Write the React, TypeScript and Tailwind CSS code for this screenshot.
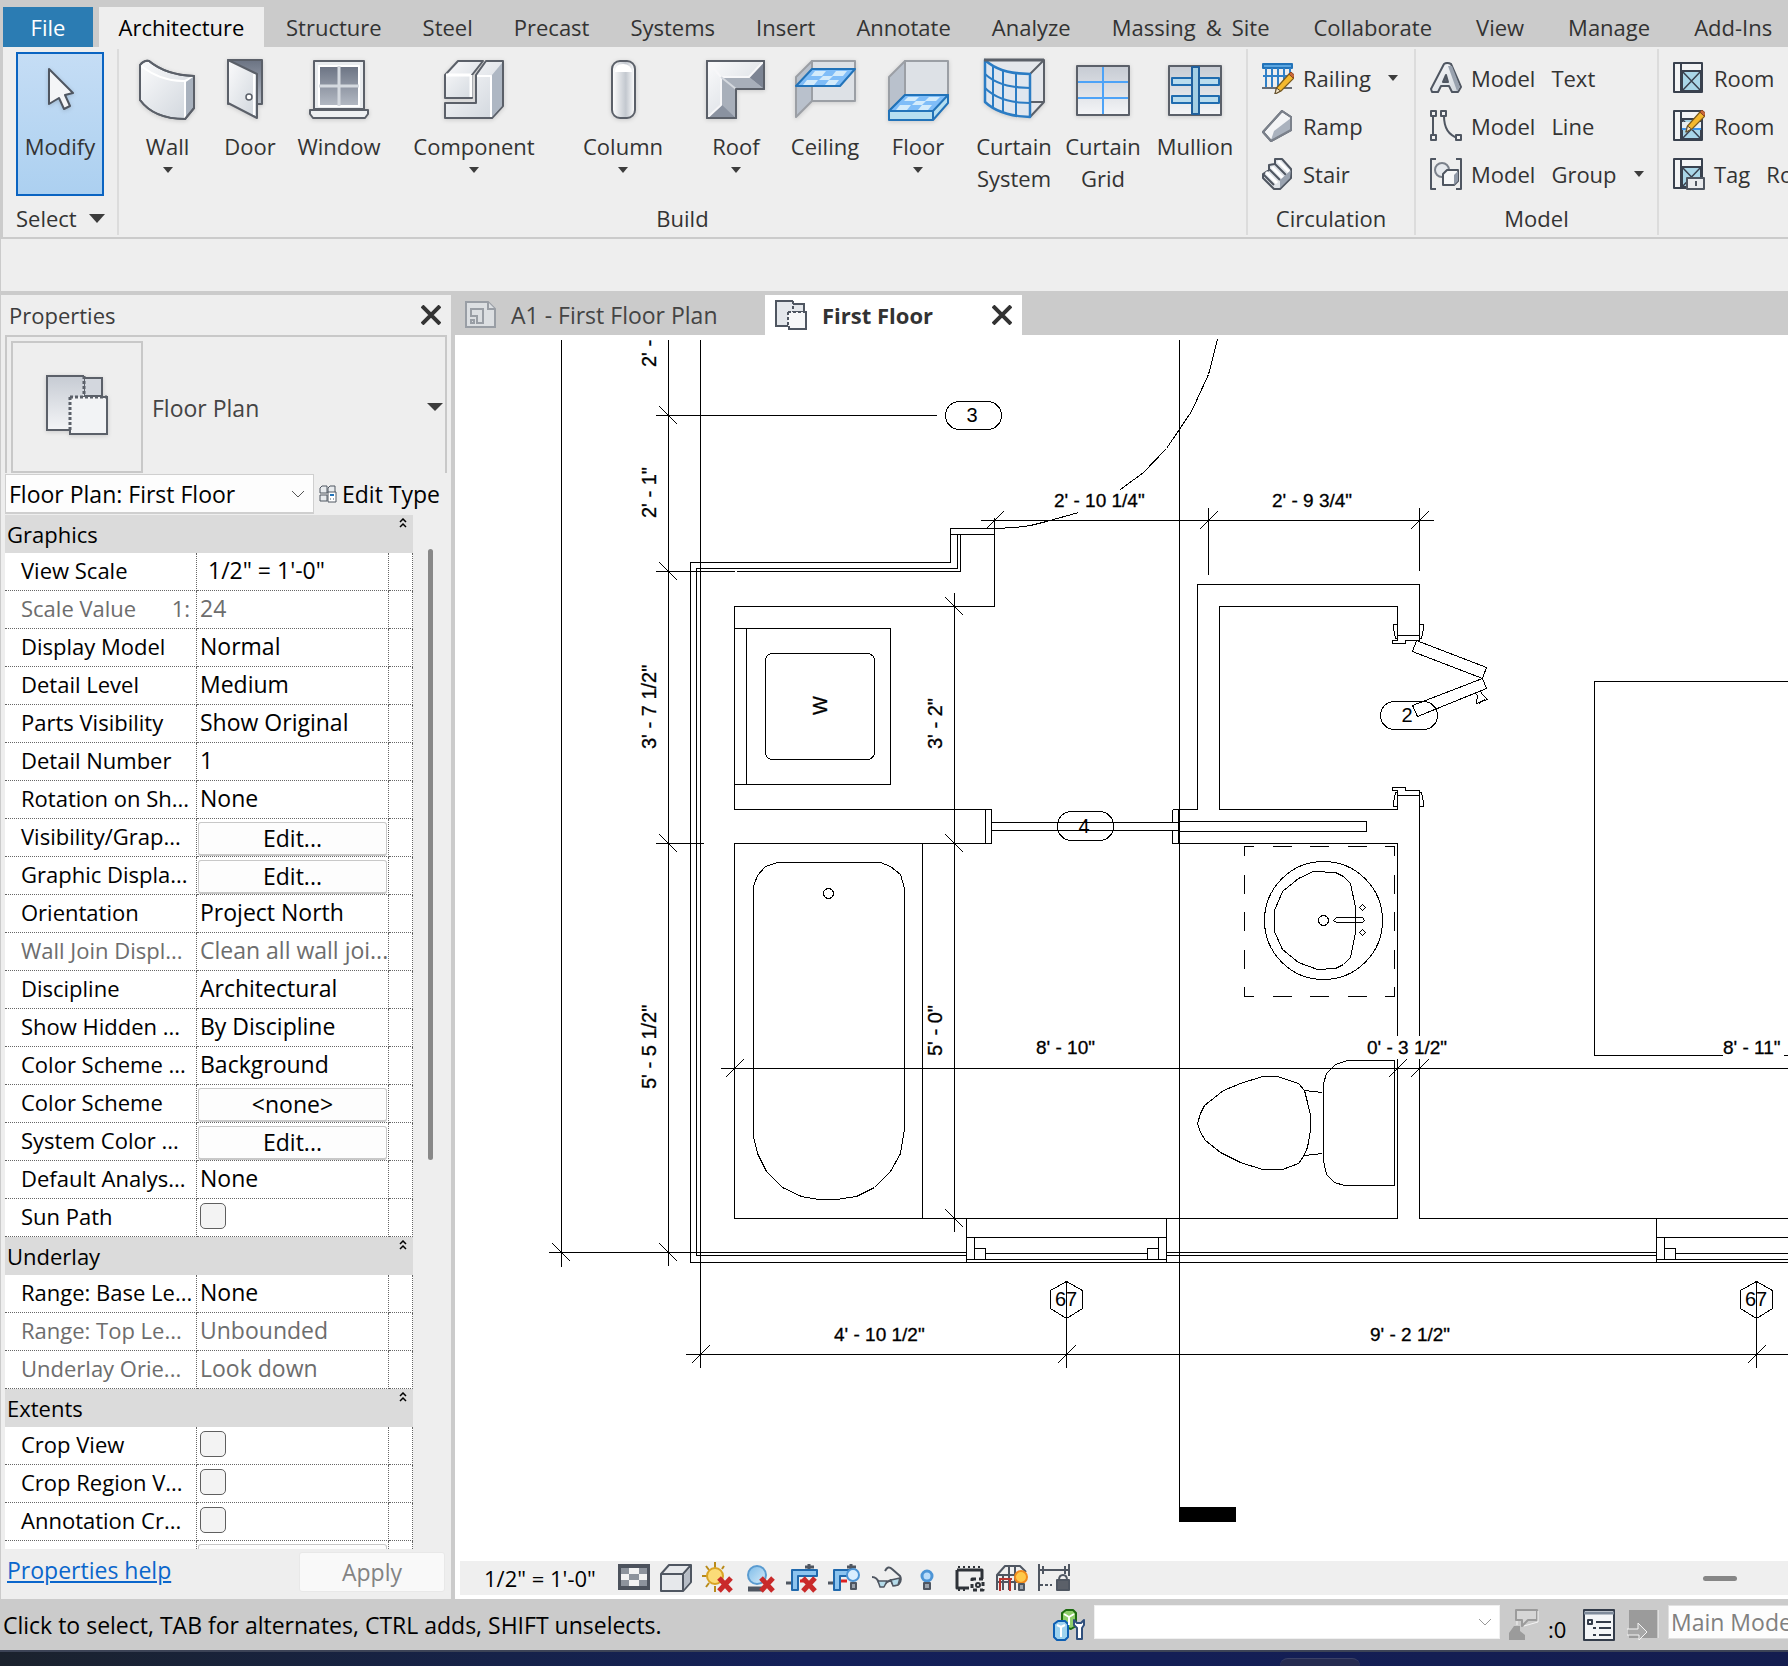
import React from 'react';

interface IconProps {
  children: React.ReactNode;
}

const Big: React.FC<IconProps> = ({ children }) => (
  <svg viewBox="-2 -2 64 64" className="h-16 w-16 shrink-0 drop-shadow-sm" fill="none" stroke="#5b6069" strokeWidth="2" strokeLinejoin="round">
    {children}
  </svg>
);

const Small: React.FC<IconProps> = ({ children }) => (
  <svg viewBox="0 0 32 32" className="h-8 w-8 shrink-0" fill="none" stroke="#4f5661" strokeWidth="2" strokeLinejoin="round">
    {children}
  </svg>
);

const Gradients = () => (
  <svg className="absolute h-0 w-0" aria-hidden="true">
    <defs>
      <linearGradient id="steel" x1="0" y1="0" x2="1" y2="1">
        <stop offset="0" stopColor="#fbfbfc" />
        <stop offset="1" stopColor="#cfd5dc" />
      </linearGradient>
      <linearGradient id="shade" x1="0" y1="0" x2="0" y2="1">
        <stop offset="0" stopColor="#c6cbd3" />
        <stop offset="1" stopColor="#f4f5f7" />
      </linearGradient>
      <linearGradient id="dark" x1="0" y1="0" x2="0" y2="1">
        <stop offset="0" stopColor="#6b7383" />
        <stop offset="1" stopColor="#b4bac4" />
      </linearGradient>
      <linearGradient id="tube" x1="0" y1="0" x2="1" y2="0">
        <stop offset="0" stopColor="#ffffff" />
        <stop offset="0.6" stopColor="#c3c8cf" />
        <stop offset="1" stopColor="#ffffff" />
      </linearGradient>
      <linearGradient id="sky" x1="0" y1="0" x2="1" y2="1">
        <stop offset="0" stopColor="#7dbbe8" />
        <stop offset="1" stopColor="#d6ecfa" />
      </linearGradient>
    </defs>
  </svg>
);

const Caret = () => (
  <svg viewBox="0 0 10 6" className="h-[6px] w-[10px] shrink-0" fill="#3c3c3c">
    <path d="M0 0h10L5 6z" />
  </svg>
);

const Pencil = () => (
  <g>
    <path d="M13 32l1.500-6L27 12l5 4L19 29z" fill="#f5b92e" stroke="#7a5a1c" strokeWidth="1.200" />
    <path d="M27 12l2-2 4 3.500-2 2.500z" fill="#c9683a" stroke="#8c4522" strokeWidth="1" />
    <path d="M13 32l1.500-6 4 3z" fill="#f3e3c4" stroke="#5a4a30" strokeWidth="1" />
  </g>
);

const tools = [
  {
    label: ['Wall'], menu: true, width: 'w-[85px]',
    icon: (
      <Big>
        <path d="M2 5Q6 0 11 1Q28 15 56 16V48L47 59Q16 59 2 40z" fill="url(#steel)" />
        <path d="M3 6Q24 22 47 21V58M47 21L55 17" stroke="#fff" />
        <path d="M48 22L55 17V48L48 57z" fill="#a9b2be" stroke="none" />
        <path d="M2 5Q6 0 11 1Q28 15 56 16V48L47 59Q16 59 2 40z" />
      </Big>
    ),
  },
  {
    label: ['Door'], menu: false, width: 'w-[80px]',
    icon: (
      <Big>
        <path d="M8 0H42V44H8z" fill="url(#dark)" />
        <path d="M8 0L37 14V58L8 43z" fill="url(#steel)" />
        <path d="M34 14V55" stroke="#fff" />
        <circle cx="29" cy="37" r="3" fill="#fff" strokeWidth="1.500" />
      </Big>
    ),
  },
  {
    label: ['Window'], menu: false, width: 'w-[98px]',
    icon: (
      <Big>
        <path d="M5 1H55V49H5z" fill="#e9ecef" />
        <path d="M10 6H50V46H10z" fill="url(#dark)" stroke="#fff" />
        <path d="M30 6V46M10 26H50" stroke="#d5dae0" strokeWidth="3" />
        <path d="M1 50H59V54L56 58H4L1 54z" fill="#eef0f2" />
      </Big>
    ),
  },
  {
    label: ['Component'], menu: true, width: 'w-[172px]',
    icon: (
      <Big>
        <path d="M1 15L14 1H39L28 15V38H1z" fill="url(#steel)" />
        <path d="M2 15H27M27 15V37" stroke="#fff" strokeWidth="3" />
        <path d="M1 43H32V15L42 1H59V46L48 58H1z" fill="url(#steel)" />
        <path d="M48 15L58 3V46L48 57z" fill="#aeb7c3" stroke="none" />
        <path d="M33 16H47V57" stroke="#fff" />
      </Big>
    ),
  },
  {
    label: ['Column'], menu: true, width: 'w-[126px]',
    icon: (
      <Big>
        <rect x="19" y="1" width="23" height="57" rx="8" fill="url(#tube)" />
        <path d="M22 12Q22 4 30 4T39 12z" fill="#fff" stroke="none" />
      </Big>
    ),
  },
  {
    label: ['Roof'], menu: true, width: 'w-[100px]',
    icon: (
      <Big>
        <path d="M1 1H58V29H30V58H1z" fill="url(#steel)" />
        <path d="M15 17L43 17L58 29H30V58L15 45z" fill="#a8afba" stroke="none" />
        <path d="M58 1L43 17L58 29z" fill="#7d8594" stroke="none" />
        <path d="M1 58L15 44L30 58z" fill="#8a92a0" stroke="none" />
        <path d="M2 2L15 17H43L57 2M15 17V45L2 57" stroke="#f7f7f9" />
        <path d="M15 17L30 29" stroke="#d5d9df" />
        <path d="M1 1H58V29H30V58H1z" />
      </Big>
    ),
  },
  {
    label: ['Ceiling'], menu: false, width: 'w-[78px]',
    icon: (
      <Big>
        <path d="M17 1H60V41H17z" fill="#dde1e6" stroke="#9b9fa5" />
        <path d="M1 17L17 1V41L1 57z" fill="#b9c1cc" stroke="#9b9fa5" />
        <path d="M1 26L17 9H60L45 26z" fill="#7fbdf8" stroke="#2273b9" />
        <path d="M20 11H31L27 16H16zM41 11H52L48 16H37zM28 16H38L34 20H24zM12 20H23L19 25H8zM34 20H44L40 25H30z" fill="#d3ebfb" stroke="none" />
      </Big>
    ),
  },
  {
    label: ['Floor'], menu: true, width: 'w-[108px]',
    icon: (
      <Big>
        <path d="M17 1H60V40H17z" fill="#dde1e6" stroke="#9b9fa5" />
        <path d="M1 17L17 1V36L1 52z" fill="#b9c1cc" stroke="#9b9fa5" />
        <path d="M1 51L17 35H60V43L45 60H1z" fill="#b5def0" stroke="#2273b9" />
        <path d="M1 51L17 35H60L45 51z" fill="#7fbdf8" stroke="#2273b9" />
        <path d="M20 37H31L27 41H16zM41 37H52L48 41H37zM28 41H38L34 45H24zM12 45H23L19 50H8zM34 45H44L40 50H30z" fill="#d3ebfb" stroke="none" />
        <path d="M45 51V59" stroke="#2273b9" />
      </Big>
    ),
  },
  {
    label: ['Curtain', 'System'], menu: false, width: 'w-[84px]',
    icon: (
      <Big>
        <path d="M0 0H60V42L46 57Q16 56 1 42z" fill="#e4e7ec" stroke="none" />
        <path d="M0 0H60V42L46 57M60 0L46 14M46 42H60" />
        <path d="M1 0Q16 14 46 14V57Q16 56 1 42z" fill="#dfe6ef" stroke="#2b7cc4" strokeWidth="2.500" />
        <path d="M1 14Q16 28 46 28M1 28Q16 43 46 43M9 7V48M19 11V53M32 14V57" stroke="#2b7cc4" />
        <path d="M0 0H60" strokeWidth="3" />
      </Big>
    ),
  },
  {
    label: ['Curtain', 'Grid'], menu: false, width: 'w-[94px]',
    icon: (
      <Big>
        <path d="M4 6H56V55H4z" fill="url(#shade)" />
        <path d="M30 7V54M5 22H55M5 38H55" stroke="#4da3f7" />
      </Big>
    ),
  },
  {
    label: ['Mullion'], menu: false, width: 'w-[90px]',
    icon: (
      <Big>
        <path d="M4 6H56V55H4z" fill="url(#shade)" />
        <path d="M7 18H54V25H7zM7 36H54V43H7z" fill="#b9dcee" stroke="#1f6cb0" />
        <path d="M27 7H34V54H27z" fill="#a4cfe4" stroke="#1f5f9c" />
      </Big>
    ),
  },
];

const tabs = [['Structure'], ['Steel'], ['Precast'], ['Systems'], ['Insert'], ['Annotate'], ['Analyze'], ['Massing', '&', 'Site']];
const moreTabs = ['Collaborate', 'View', 'Manage', 'Add-Ins'];

const RailingIcon = () => (
  <Small>
    <path d="M1 2H30V6H1z" fill="#5aa5e0" stroke="#2273b9" />
    <path d="M4 6V26M10 6V26M16 6V26M22 6V20M28 6V14M1 14H28" stroke="#2f80c8" />
    <path d="M0 26H30" stroke="#686d75" />
    <Pencil />
  </Small>
);
const RampIcon = () => (
  <Small>
    <path d="M1 22L20 1L29 7V20L9 31z" fill="#f3f4f6" />
    <path d="M9 30L12 21L29 8V20z" fill="#aab2be" stroke="none" />
    <path d="M1 22L20 1L29 7V20L9 31z" stroke="#7b818b" />
  </Small>
);
const StairIcon = () => (
  <Small>
    <path d="M1 16L7 12V7L13 6V1L20 1L29 11V20L18 31H12L1 20z" fill="#dfe3e8" />
    <path d="M1 16L12 27M7 11L18 22M13 6L24 17" stroke="#4f5661" />
    <path d="M4 14L15 25M10 9L21 20M16 3L27 14" stroke="#fff" strokeWidth="3" />
    <path d="M29 12L18 22V30L28 20z" fill="#9aa3b0" stroke="none" />
  </Small>
);
const ModelTextIcon = () => (
  <Small>
    <path d="M1 27L14 2Q17 0 21 2L31 25L28 30H22L19 24H11L8 30H2z" fill="url(#steel)" />
    <path d="M22 4L30 25L27 29L18 4z" fill="#99a2af" stroke="none" />
    <path d="M13 20L16 13L18 20z" fill="#5c6370" />
  </Small>
);
const ModelLineIcon = () => (
  <Small>
    <path d="M3 6V26M14 6Q14 24 28 28" />
    <path d="M1 1H6V6H1zM11 1H16V6H11zM1 25H6V30H1zM26 25H31V30H26z" fill="#f2f2f2" />
  </Small>
);
const ModelGroupIcon = () => (
  <Small>
    <path d="M6 1H1V31H6M26 1H31V31H26" />
    <circle cx="12" cy="12" r="7" fill="#e6e9ed" stroke="#7b818b" />
    <path d="M13 16L17 12H28V23L24 27H13z" fill="#f6f7f8" />
    <path d="M24 17L28 13V23L24 27z" fill="#8f98a6" stroke="none" />
  </Small>
);

interface RoomIconProps {
  kind: 'room' | 'separator' | 'tag';
}
const RoomIcon: React.FC<RoomIconProps> = ({ kind }) => (
  <Small>
    <path d="M1 1H29V30H1z" fill="#f3f4f5" stroke="#39414e" />
    <path d="M8 2V29" stroke="#39414e" />
    <path d="M9 9H28V29H9z" fill="#a9d6e8" stroke="#39414e" />
    <path d="M9 9L28 29M28 9L9 29" stroke="#39414e" strokeWidth="1.500" />
    {kind === 'separator' && <path d="M9 12H28V19H9z" fill="#e7eef2" stroke="none" />}
    {kind === 'separator' && <path d="M9 19H28" stroke="#3c93e8" />}
    {kind === 'separator' && <g transform="translate(0 -10)"><Pencil /></g>}
    {kind === 'tag' && <path d="M14 20H31V31H14z" fill="#e9ebee" stroke="#4f5661" />}
    {kind === 'tag' && <path d="M23 23V28" />}
  </Small>
);

interface RowButtonProps {
  words: string[];
  icon: React.ReactNode;
  menu?: boolean;
}
const RowButton: React.FC<RowButtonProps> = ({ words, icon, menu }) => (
  <button className="flex h-12 items-center gap-[9px] whitespace-nowrap pl-[14px]">
    {icon}
    <span className="flex gap-4">{words.map((w) => <span key={w}>{w}</span>)}</span>
    {menu && <span className="pl-[8px]"><Caret /></span>}
  </button>
);

const Ribbon = () => (
  <header className="shrink-0 text-[#333]">
    <nav className="flex h-[47px] items-end overflow-hidden bg-[#cbcbcb] pl-[3px]">
      <button className="h-10 w-[90px] shrink-0 bg-[#2b7cb3] text-white">File</button>
      <button className="ml-[6px] h-10 w-[165px] shrink-0 bg-[#eee] text-black">Architecture</button>
      <div className="flex h-10 shrink-0 items-center gap-[41px] pl-[22px]">
        {tabs.map((words) => (
          <button key={words.join(' ')} className="flex gap-[10px] whitespace-nowrap">
            {words.map((w) => <span key={w}>{w}</span>)}
          </button>
        ))}
      </div>
      <div className="flex h-10 shrink-0 items-center gap-11 pl-11">
        {moreTabs.map((t) => <button key={t} className="whitespace-nowrap">{t}</button>)}
      </div>
    </nav>
    <div className="ml-[3px] flex h-[190px] overflow-hidden bg-[#eee] py-[2px]">
      <div className="flex w-[116px] shrink-0 flex-col border-r-2 border-[#dcdcdc] pl-[13px] pt-[3px]">
        <button className="flex h-[144px] w-[88px] flex-col items-center border-2 border-[#0a64c2] bg-linear-to-b from-[#c5ddf5] to-[#acd0f0]">
          <svg viewBox="0 0 64 64" className="mt-[3px] h-16 w-16 drop-shadow-sm" fill="#f4f5f7" stroke="#4f5661" strokeWidth="2" strokeLinejoin="round">
            <path d="M21 12L45 36L37 38L42 49L36 52L31 41L21 47z" />
          </svg>
          <span className="mt-[9px] leading-8">Modify</span>
        </button>
        <button className="mt-[6px] flex h-8 items-center gap-3">
          Select
          <svg viewBox="0 0 16 9" className="h-[9px] w-4" fill="#3c3c3c"><path d="M0 0h16L8 9z" /></svg>
        </button>
      </div>
      <div className="flex shrink-0 flex-col border-r-2 border-[#dcdcdc]">
        <div className="flex h-[153px] px-[6px] pt-[9px]">
          {tools.map((t) => (
            <button key={t.label.join('')} className={`${t.width} flex shrink-0 flex-col items-center`}>
              {t.icon}
              <span className="mt-[8px] whitespace-nowrap leading-8">
                {t.label.map((l) => <span key={l} className="block">{l}</span>)}
              </span>
              {t.menu && <span className="mt-[5px]"><Caret /></span>}
            </button>
          ))}
        </div>
        <div className="text-center leading-8">Build</div>
      </div>
      <div className="flex w-[168px] shrink-0 flex-col border-r-2 border-[#dcdcdc] pt-[5px]">
        <RowButton words={['Railing']} icon={<RailingIcon />} menu />
        <RowButton words={['Ramp']} icon={<RampIcon />} />
        <RowButton words={['Stair']} icon={<StairIcon />} />
        <div className="mt-[4px] text-center leading-8">Circulation</div>
      </div>
      <div className="flex w-[243px] shrink-0 flex-col border-r-2 border-[#dcdcdc] pt-[5px]">
        <RowButton words={['Model', 'Text']} icon={<ModelTextIcon />} />
        <RowButton words={['Model', 'Line']} icon={<ModelLineIcon />} />
        <RowButton words={['Model', 'Group']} icon={<ModelGroupIcon />} menu />
        <div className="mt-[4px] text-center leading-8">Model</div>
      </div>
      <div className="flex flex-col pt-[5px]">
        <RowButton words={['Room']} icon={<RoomIcon kind="room" />} />
        <RowButton words={['Room']} icon={<RoomIcon kind="separator" />} />
        <RowButton words={['Tag', 'Room']} icon={<RoomIcon kind="tag" />} />
      </div>
    </div>
    <div className="h-[58px] border-b-4 border-l border-t-2 border-[#cbcbcb] bg-[#eee]" />
  </header>
);

interface Property {
  name: string;
  value?: string;
  kind?: 'text' | 'button' | 'check' | 'input';
  muted?: boolean;
  suffix?: string;
}

const sections: { title: string; rows: Property[] }[] = [
  {
    title: 'Graphics',
    rows: [
      { name: 'View Scale', value: '1/2" = 1\'-0"', kind: 'input' },
      { name: 'Scale Value', value: '24', muted: true, suffix: '1:' },
      { name: 'Display Model', value: 'Normal' },
      { name: 'Detail Level', value: 'Medium' },
      { name: 'Parts Visibility', value: 'Show Original' },
      { name: 'Detail Number', value: '1' },
      { name: 'Rotation on Sh...', value: 'None' },
      { name: 'Visibility/Grap...', value: 'Edit...', kind: 'button' },
      { name: 'Graphic Displa...', value: 'Edit...', kind: 'button' },
      { name: 'Orientation', value: 'Project North' },
      { name: 'Wall Join Displ...', value: 'Clean all wall joi...', muted: true },
      { name: 'Discipline', value: 'Architectural' },
      { name: 'Show Hidden ...', value: 'By Discipline' },
      { name: 'Color Scheme ...', value: 'Background' },
      { name: 'Color Scheme', value: '<none>', kind: 'button' },
      { name: 'System Color ...', value: 'Edit...', kind: 'button' },
      { name: 'Default Analys...', value: 'None' },
      { name: 'Sun Path', kind: 'check' },
    ],
  },
  {
    title: 'Underlay',
    rows: [
      { name: 'Range: Base Le...', value: 'None' },
      { name: 'Range: Top Le...', value: 'Unbounded', muted: true },
      { name: 'Underlay Orie...', value: 'Look down', muted: true },
    ],
  },
  {
    title: 'Extents',
    rows: [
      { name: 'Crop View', kind: 'check' },
      { name: 'Crop Region V...', kind: 'check' },
      { name: 'Annotation Cr...', kind: 'check' },
      { name: '', value: '', kind: 'button' },
    ],
  },
];

const PropertyValue: React.FC<{ row: Property }> = ({ row }) => {
  if (row.kind === 'check') {
    return (
      <input
        type="checkbox"
        aria-label={row.name}
        className="block size-[26px] appearance-none rounded-[5px] border border-[#5f5f5f] bg-[#f3f3f3]"
      />
    );
  }
  if (row.kind === 'button') {
    return (
      <button aria-label={row.name || 'Edit'} className="-ml-[2px] block h-[34px] w-[189px] rounded-[3px] border border-b-2 border-[#c8c8c8] bg-[#fdfdfd] leading-[30px]">
        {row.value}
      </button>
    );
  }
  return <span className={row.kind === 'input' ? 'pl-2' : ''}>{row.value}</span>;
};

const CloseIcon = () => (
  <svg viewBox="0 0 20 20" className="h-5 w-5" stroke="#333" strokeWidth="4"><path d="M1 1L19 19M19 1L1 19" /></svg>
);

const PropertiesPanel = () => (
  <aside className="flex w-[455px] shrink-0 flex-col border-l border-r-4 border-[#cbcbcb] bg-[#eee]">
    <div className="flex h-10 shrink-0 items-center justify-between pl-[8px] pr-[10px] text-[#3c3c3c]">
      <h2>Properties</h2>
      <button aria-label="Close properties"><CloseIcon /></button>
    </div>
    <div className="mx-[4px] flex h-[138px] shrink-0 items-center border-2 border-b-0 border-[#c8c8c8] pl-[4px] text-[#444]">
      <div className="mt-[4px] flex size-[132px] items-center justify-center border-2 border-[#c8c8c8]">
        <svg viewBox="0 0 64 64" className="h-16 w-16 drop-shadow-sm" stroke="#5b6069" strokeWidth="2">
          <path d="M39 3H57V21H39z" fill="#d3d7de" />
          <path d="M2 1H39V55H2z" fill="url(#shade)" stroke="none" />
          <path d="M39 1H2V55H25" fill="none" />
          <path d="M25 22H62V59H25z" fill="#f2f3f5" stroke="none" />
          <path d="M58 22H62V59H25V54" fill="none" />
          <path d="M39 1V22M25 22H62M25 22V55" fill="none" strokeDasharray="3 2" strokeWidth="3" />
        </svg>
      </div>
      <span className="mt-[5px] grow pl-[9px] text-[23px]">Floor Plan</span>
      <button aria-label="Choose type" className="mt-[4px] pr-[2px]">
        <svg viewBox="0 0 16 8" className="h-2 w-4" fill="#3c3c3c"><path d="M0 0h16L8 8z" /></svg>
      </button>
    </div>
    <div className="flex h-[42px] shrink-0 items-center pl-[4px] text-[23px] text-black">
      <div className="relative">
        <select aria-label="View" className="h-10 w-[309px] appearance-none border border-b-2 border-[#cfcfcf] bg-[#fdfdfd] pl-[3px]">
          <option>Floor Plan: First Floor</option>
        </select>
        <svg viewBox="0 0 14 8" className="pointer-events-none absolute right-[9px] top-4 h-2 w-[14px]" fill="none" stroke="#555"><path d="M1 1l6 6 6-6" /></svg>
      </div>
      <button className="flex items-center gap-[5px] whitespace-nowrap pl-[5px]">
        <svg viewBox="0 0 18 18" className="h-[18px] w-[18px]" fill="#e8ebee" stroke="#4f5661">
          <path d="M1 3L3 1H8V8H1zM9 3L11 1H16V8H9zM1 10H8V16H1z" />
          <path d="M9 7H17V17H9z" fill="#fff" />
          <path d="M11 9H15V11H11z" fill="#2273b9" stroke="none" />
          <path d="M11 14h1M14 14h1" />
        </svg>
        Edit Type
      </button>
    </div>
    <div className="flex min-h-0 flex-1 pl-[4px] text-black">
      <div className="min-h-0 w-[408px] overflow-hidden">
        <table className="w-full table-fixed border-separate border-spacing-0 bg-white">
          <colgroup>
            <col className="w-[192px]" />
            <col className="w-[192px]" />
            <col className="w-[24px]" />
          </colgroup>
          {sections.map((s) => (
            <tbody key={s.title}>
              <tr className="h-[38px] bg-[#dbdbdb]">
                <th colSpan={3} className="p-0 pl-[2px] text-left font-normal">
                  <span className="flex justify-between pr-[6px]">
                    {s.title}
                    <svg viewBox="0 0 8 10" className="h-[10px] w-2" fill="none" stroke="#000" strokeWidth="1.500"><path d="M1 4l3-3 3 3M1 9l3-3 3 3" /></svg>
                  </span>
                </th>
              </tr>
              {s.rows.map((r, i) => (
                <tr key={i} className={`h-[38px] ${r.muted ? 'text-[#6d6d6d]' : ''}`}>
                  <td className="whitespace-nowrap border-b border-r border-dotted border-[#666] p-0 pb-1 pl-4">
                    <span className="flex justify-between pr-[6px]">
                      <span>{r.name}</span>
                      {r.suffix && <span>{r.suffix}</span>}
                    </span>
                  </td>
                  <td className={`whitespace-nowrap border-b border-r border-dotted border-[#666] p-0 pl-[3px] text-[23px] ${r.kind === 'button' ? 'pt-[2px]' : 'pb-1'}`}>
                    <PropertyValue row={r} />
                  </td>
                  <td className="border-b border-r border-dotted border-[#666] p-0" />
                </tr>
              ))}
            </tbody>
          ))}
        </table>
      </div>
      <div className="ml-[15px] mt-[34px] h-[611px] w-[5px] rounded-full bg-[#888]" />
    </div>
    <div className="flex h-[50px] shrink-0 items-center justify-between pl-[6px] pr-[6px] text-[23px]">
      <a href="#help" className="mb-2 text-[#0a66cc] underline underline-offset-2">Properties help</a>
      <button disabled className="mb-1 h-10 w-[146px] rounded-[3px] border border-[#e8e8e8] bg-[#f9f9f9] text-[#838383]">Apply</button>
    </div>
  </aside>
);

interface Dim {
  x: number;
  y: number;
  text: string;
}

const dims: Dim[] = [
  { x: 1054, y: 507, text: '2\' - 10 1/4"' },
  { x: 1272, y: 507, text: '2\' - 9 3/4"' },
  { x: 1036, y: 1054, text: '8\' - 10"' },
  { x: 1367, y: 1054, text: '0\' - 3 1/2"' },
  { x: 1723, y: 1054, text: '8\' - 11"' },
  { x: 834, y: 1341, text: '4\' - 10 1/2"' },
  { x: 1370, y: 1341, text: '9\' - 2 1/2"' },
];

const uprightDims: Dim[] = [
  { x: 656, y: 367, text: "2' - 1\"" },
  { x: 656, y: 518, text: '2\' - 1"' },
  { x: 656, y: 749, text: '3\' - 7 1/2"' },
  { x: 656, y: 1089, text: '5\' - 5 1/2"' },
  { x: 942, y: 749, text: '3\' - 2"' },
  { x: 942, y: 1056, text: '5\' - 0"' },
  { x: 827, y: 715, text: 'W' },
];

const slashes = [[994, 520], [1208, 520], [1419, 520], [734, 1068], [1397, 1068], [1419, 1068], [700, 1354], [1066, 1354], [1756, 1354]];
const backslashes = [[668, 415], [668, 571], [668, 843], [561, 1252], [668, 1252], [954, 606], [954, 843], [954, 1218]];

const FloorPlan = () => (
  <svg className="min-h-0 w-full flex-1 overflow-hidden bg-white" role="img" aria-label="First floor plan">
    <g transform="translate(-454.5 -334.5)" fill="none" stroke="#000" strokeWidth="1" shapeRendering="crispEdges">
      {/* dimension strings */}
      <path d="M561 339V1266M668 339V1265M700 339V1367M655 415H936M655 571H734M655 843H703M548 1252H966" />
      <path d="M980 520H1433M1208 507V574M1419 507V570M720 1068H1788M954 592V1231M685 1354H1788" />
      <path d="M1066 1281V1367M1756 1281V1367" />
      {slashes.map(([x, y]) => <path key={`${x}-${y}`} d={`M${x - 9} ${y + 9}L${x + 9} ${y - 9}`} />)}
      {backslashes.map(([x, y]) => <path key={`${x}-${y}`} d={`M${x - 9} ${y - 9}L${x + 9} ${y + 9}`} />)}

      {/* section line */}
      <path d="M1179 339V1508" />
      <path d="M1179 1507H1235V1521H1179z" fill="#000" />

      {/* exterior walls */}
      <path d="M994 517V606H734V809H991V843H734V1218H1397M994 528H950V562H690V1262H1788M950 534H994" />
      <path d="M957 534V568H696V1255H966M960 534V571H736M985 809V843M1166 1252H1656M1166 1255H1656M1419 1218H1788" />

      {/* closet and partition */}
      <path d="M1172 809H1197V584H1419V640M1397 635V606H1219V809H1397V795M1172 809V822M1172 830V843H1397V1035M1397 1058V1218" />
      <path d="M1419 790V1035M1419 1058V1218M1178 809V843M1179 821H1366V831H1179M991 822H1178M991 830H1178" />
      <path d="M1397 635H1419V640H1405V643H1392V640H1397zM1397 795H1419V790H1405V787H1392V790H1397z" />
      <path d="M1397 624H1393V628L1395 638H1397M1419 624H1423V628L1421 638H1419M1397 792H1395L1393 802V806H1397M1419 792H1421L1423 802V806H1419" />

      {/* bifold door */}
      <path d="M1416 640L1412 651L1482 678L1486 667zM1482 678L1486 688L1417 716L1412 705z" />
      <path d="M1475 693L1477 695L1476 703L1487 699L1482 694L1480 691M1479 703L1485 698" />

      {/* door swing */}
      <path d="M994 528L1015 527L1030 525L1046 521L1078 512M1120 489L1143 472L1166 448L1191 411L1208 374L1217 339" />

      {/* tags */}
      <rect x="945" y="401" width="56" height="28" rx="14" />
      <rect x="1380" y="701" width="57" height="28" rx="14" />
      <rect x="1057" y="811" width="56" height="29" rx="14" />
      <path d="M1066 1281L1082 1290V1308L1066 1318L1050 1308V1290zM1756 1281L1772 1290V1308L1756 1318L1740 1308V1290z" />

      {/* washer */}
      <path d="M734 628H890V784H734M746 628V784" />
      <rect x="765" y="653" width="109" height="106" rx="7" />

      {/* tub */}
      <path d="M922 843V1218M777 862L765 866L757 875L753 886V1136L757 1153L766 1171L782 1187L801 1196L818 1199H836L856 1196L874 1187L890 1171L900 1153L904 1129V888L900 874L890 866L880 862z" />
      <circle cx="828" cy="893" r="5" />

      {/* windows */}
      <path d="M966 1218V1262M966 1237H1166M974 1237V1259M974 1248H985V1259M985 1253H1147M1147 1259V1248H1158V1237V1259M966 1259H1166M1166 1218V1262" />
      <path d="M1656 1218V1262M1656 1237H1788M1664 1237V1259M1664 1248H1675V1259M1675 1253H1788M1656 1259H1788" />

      {/* sink */}
      <rect x="1244" y="846" width="150" height="150" strokeDasharray="19 18.500" strokeDashoffset="9.500" />
      <circle cx="1323" cy="920" r="59" />
      <path d="M1274 910V931L1282 949L1298 962L1317 969L1335 968L1343 964L1350 957L1353 942L1355 932V907L1350 883L1343 876L1335 872L1313 871L1298 878L1282 891z" />
      <circle cx="1323" cy="920" r="5" />
      <path d="M1336 917H1362L1364 920L1362 922H1336L1333 920zM1362 904L1365 907L1362 910L1359 907zM1362 929L1365 932L1362 935L1359 932z" />

      {/* toilet */}
      <path d="M1394 1060H1347L1335 1064L1326 1073L1323 1083V1160L1326 1174L1334 1182L1344 1185H1394zM1304 1090L1322 1092M1304 1155L1322 1153" />
      <path d="M1197 1123L1200 1113L1204 1105L1223 1090L1240 1083L1262 1076H1277L1298 1083L1304 1090L1307 1102L1310 1115V1130L1307 1147L1303 1156L1298 1163L1282 1169H1262L1240 1162L1220 1152L1205 1140L1200 1132z" />

      {/* bed */}
      <path d="M1788 681H1594V1055H1722M1783 1055H1788" />
    </g>
    <g transform="translate(-455 -335)" className="fill-black font-['Liberation_Sans',Arial,sans-serif] text-[19px]">
      {dims.map((d) => <text key={d.text} x={d.x} y={d.y} stroke="#000" strokeWidth="0.300">{d.text}</text>)}
      <svg x="455" y="339" width="1333" height="1200">
        <g transform="translate(-455 -339)" className="text-[20px]">
          {uprightDims.map((d) => (
            <text key={`${d.x}-${d.y}`} transform={`translate(${d.x} ${d.y}) rotate(-90)`} stroke="#000" strokeWidth="0.300">{d.text}</text>
          ))}
        </g>
      </svg>
      <g textAnchor="middle" className="text-[20px]">
        <text x="972" y="422">3</text>
        <text x="1407" y="722">2</text>
        <text x="1084" y="833">4</text>
        <text x="1066" y="1306">67</text>
        <text x="1756" y="1306">67</text>
      </g>
    </g>
  </svg>
);

const RedX = () => <path d="M17 16L29 29M29 16L17 29" stroke="#c92a2a" strokeWidth="5" />;

const viewControls: { name: string; art: React.ReactNode }[] = [
  {
    name: 'Detail level',
    art: (
      <g stroke="none">
        <path d="M0 2H32V28H0z" fill="#4c525c" />
        <path d="M3 6H29V24H3z" fill="#f2f2f2" />
        <path d="M3 6H11V12H3zM21 6H29V12H21zM11 12H21V18H11zM3 18H11V24H3zM21 18H29V24H21z" fill="#8d939c" />
      </g>
    ),
  },
  {
    name: 'Visual style',
    art: (
      <g>
        <path d="M1 12L9 3H31V20L23 29H1z" fill="#e6e8eb" />
        <path d="M1 12H23V29M23 12L31 3" />
        <path d="M24 13L30 6V20L24 27z" fill="#b7bdc6" stroke="none" />
      </g>
    ),
  },
  {
    name: 'Sun path',
    art: (
      <g>
        <path d="M13 0V6M13 24V30M0 14H5M4 4L7 8M22 4L20 7M4 25L7 21" stroke="#b88a1a" />
        <circle cx="13" cy="14" r="8" fill="#fbdc78" stroke="#d9a425" />
        <RedX />
      </g>
    ),
  },
  {
    name: 'Shadows',
    art: (
      <g>
        <path d="M4 27H18" strokeWidth="5" />
        <circle cx="13" cy="13" r="9" fill="url(#sky)" stroke="#5a9bd0" />
        <RedX />
      </g>
    ),
  },
  {
    name: 'Crop view',
    art: (
      <g>
        <path d="M0 21H8M23 2V8M19 5H28" strokeWidth="3" />
        <path d="M6 28V8H31V14H12V28z" fill="#8cc4ef" stroke="#2069ad" />
        <path d="M14 19H20" stroke="#d22" strokeWidth="3" />
        <RedX />
      </g>
    ),
  },
  {
    name: 'Crop region',
    art: (
      <g>
        <path d="M0 21H8M23 2V8M19 5H28" strokeWidth="3" />
        <path d="M6 28V8H28V14H12V28z" fill="#8cc4ef" stroke="#2069ad" />
        <path d="M13 19H19" stroke="#d22" strokeWidth="3" />
        <circle cx="25" cy="13" r="6" fill="#d8eeff" stroke="#4d95d6" />
        <path d="M23 21H28V27H23z" fill="#9aa2ac" />
      </g>
    ),
  },
  {
    name: 'Hide or isolate',
    art: (
      <g>
        <path d="M2 15Q7 15 9 21Q13 26 17 20L21 18Q23 26 29 22Q32 18 30 14L22 7Q18 3 15 9" />
        <path d="M8 19H17L14 25H10zM21 18L30 16L28 23L23 24z" fill="#b6dcea" strokeWidth="1.500" />
      </g>
    ),
  },
  {
    name: 'Reveal hidden elements',
    art: (
      <g>
        <circle cx="15" cy="14" r="5" fill="#b9dcfa" stroke="#4d95d6" strokeWidth="3" />
        <path d="M12 21H18V27H12z" fill="#9aa2ac" />
      </g>
    ),
  },
  {
    name: 'Temporary view properties',
    art: (
      <g stroke="#2e3238">
        <path d="M3 8H28V17M3 8V26H15" strokeWidth="3" />
        <path d="M4 5H28M4 28H14" strokeDasharray="2 3" />
        <path d="M18 17H29V28H18z" strokeDasharray="4 3" strokeWidth="3" />
        <circle cx="24" cy="23" r="2" />
      </g>
    ),
  },
  {
    name: 'Analytical model',
    art: (
      <g>
        <path d="M1 28V13L9 4H24L30 10M1 13H22M7 13V28M13 4V28M19 4V28M1 20H22" />
        <path d="M3 17H16M4 17V29M14 17V29" stroke="#b8342e" />
        <circle cx="25" cy="15" r="6" fill="#ffc94a" stroke="#f08a1c" />
        <path d="M23 22H28V28H23z" fill="#9aa2ac" />
      </g>
    ),
  },
  {
    name: 'Reveal constraints',
    art: (
      <g>
        <path d="M1 2V29M31 2V14M1 8H31M5 4V12M27 4V12" />
        <path d="M2 23H14" strokeDasharray="3 2" />
        <path d="M19 18H31V28H19z" fill="#5b6069" />
        <path d="M21 18Q21 13 25 13T29 18" />
      </g>
    ),
  },
];

const DocumentArea = () => (
  <main className="flex min-w-0 flex-1 flex-col bg-white">
    <div className="flex h-10 shrink-0 bg-[#cbcbcb] text-[#444]">
      <button className="flex w-[310px] items-center gap-[15px] whitespace-nowrap pl-[9px] text-[23px]">
        <svg viewBox="0 0 32 32" className="h-8 w-8" fill="#dcdfe2" stroke="#999ea5" strokeWidth="2">
          <path d="M2 3H24L31 10V28H2z" />
          <path d="M7 10H19V24H13V17H7zM7 21H10V24H7zM24 3V10H31" />
        </svg>
        A1 - First Floor Plan
      </button>
      <div className="flex w-[257px] items-center bg-white pl-[10px] text-[#333]">
        <svg viewBox="0 0 32 32" className="h-8 w-8" fill="#e4e7eb" stroke="#4f5661" strokeWidth="2">
          <path d="M17 5H29V13H17z" />
          <path d="M1 2H18V27H1z" stroke="none" />
          <path d="M18 2H1V27H13" fill="none" />
          <path d="M13 13H31V30H13z" fill="#f7f8f9" stroke="none" />
          <path d="M28 13H31V30H14V27" fill="none" />
          <path d="M18 2V13M13 13H29M13 13V27" fill="none" strokeDasharray="3 2" />
        </svg>
        <button className="grow whitespace-nowrap pl-[15px] text-left font-bold">First Floor</button>
        <button aria-label="Close First Floor" className="pr-[10px]"><CloseIcon /></button>
      </div>
    </div>
    <FloorPlan />
    <div className="mb-[4px] ml-[5px] flex h-[34px] shrink-0 items-center bg-[#efefef] pl-6 text-black">
      <button className="w-[134px] whitespace-nowrap text-left">1/2" = 1'-0"</button>
      <div className="flex grow gap-[10px]">
        {viewControls.map((c) => (
          <button key={c.name} aria-label={c.name} title={c.name}>
            <Small>{c.art}</Small>
          </button>
        ))}
      </div>
      <div className="mr-[51px] h-[5px] w-[34px] rounded-full bg-[#868686]" />
    </div>
  </main>
);

const StatusBar = () => (
  <footer className="shrink-0 text-black">
    <div className="flex h-[51px] items-center overflow-hidden bg-[#cbcbcb] pl-[3px]">
      <span className="w-[1050px] shrink-0 whitespace-nowrap text-[23px]">Click to select, TAB for alternates, CTRL adds, SHIFT unselects.</span>
      <button aria-label="Worksets" className="shrink-0">
        <Small>
          <path d="M9 4L13 1H20L23 4V17L18 20L9 17z" fill="#8fce6b" stroke="#1c6b10" />
          <path d="M1 15L5 12H12L15 15V28L12 31H4L1 28z" fill="#9fd3ef" stroke="#0d5fb3" />
          <path d="M11 5L16 8L21 5M16 8V16M4 16L8 18L12 16M8 18V28" stroke="#fff" />
          <path d="M21 11V16L24 19V30H29V19L31 16V11L28 14H24z" fill="#fff" stroke="#2f4f7c" />
        </Small>
      </button>
      <div className="relative mb-[9px] ml-[9px] mt-[4px] shrink-0">
        <select aria-label="Active workset" className="block h-[34px] w-[406px] appearance-none border border-[#f0f0f0] bg-white" />
        <svg viewBox="0 0 14 8" className="pointer-events-none absolute right-[8px] top-[13px] h-2 w-[14px]" fill="none" stroke="#999"><path d="M1 1l6 6 6-6" /></svg>
      </div>
      <button aria-label="Editing requests" className="ml-[8px] shrink-0">
        <Small>
          <path d="M8 1H29V11H20L14 17V11H8z" stroke="#9b9b9b" fill="#d6d6d6" />
          <path d="M1 31V24L6 17H12V22L17 26V31z" fill="#9b9b9b" stroke="none" />
          <path d="M9 12V16M16 17L30 13V2" stroke="#f4f4f4" strokeWidth="1" />
        </Small>
      </button>
      <span className="mt-2 w-[43px] shrink-0 pl-2">:0</span>
      <button aria-label="Design options" className="shrink-0">
        <Small>
          <path d="M1 1H31V31H1z" fill="#f4f6f8" stroke="#333c4a" />
          <path d="M1 4H31" stroke="#7f8b9b" strokeWidth="3" />
          <path d="M5 11H9V15H5zM13 13H28M10 19H13M16 19H28M10 26H13M16 26H28" stroke="#333c4a" />
        </Small>
      </button>
      <button aria-label="Active only" className="ml-3 shrink-0">
        <Small>
          <path d="M2 1H31V29H2z" fill="#9b9b9b" stroke="none" />
          <path d="M0 20H11V14L20 23L12 31V26H0z" fill="#a8a8a8" stroke="#f4f4f4" strokeWidth="1" />
          <path d="M31 1V29" stroke="#f4f4f4" strokeWidth="1" />
        </Small>
      </button>
      <select aria-label="Design option" className="mb-[9px] ml-[9px] mt-[4px] h-[34px] w-[260px] shrink-0 appearance-none border border-[#e0e0e0] bg-[#fdfdfd] pl-[2px] text-[23px] text-[#808080]">
        <option>Main Model</option>
      </select>
    </div>
    <div className="flex h-4 items-end justify-center overflow-hidden border-t-2 border-[#3c4356] bg-linear-to-r from-[#1b222d] via-[#14205a] via-45% to-[#141d4f]">
      <div className="ml-[852px] h-2 w-20 rounded-t-lg border-t border-[#3b4166] bg-[#262b50]" />
    </div>
  </footer>
);

export default function App() {
  return (
    <div className="flex h-screen flex-col overflow-hidden bg-[#cbcbcb] font-['Open_Sans','Noto_Sans',sans-serif] text-[22px] leading-8">
      <Gradients />
      <Ribbon />
      <div className="flex min-h-0 flex-1">
        <PropertiesPanel />
        <DocumentArea />
      </div>
      <StatusBar />
    </div>
  );
}
